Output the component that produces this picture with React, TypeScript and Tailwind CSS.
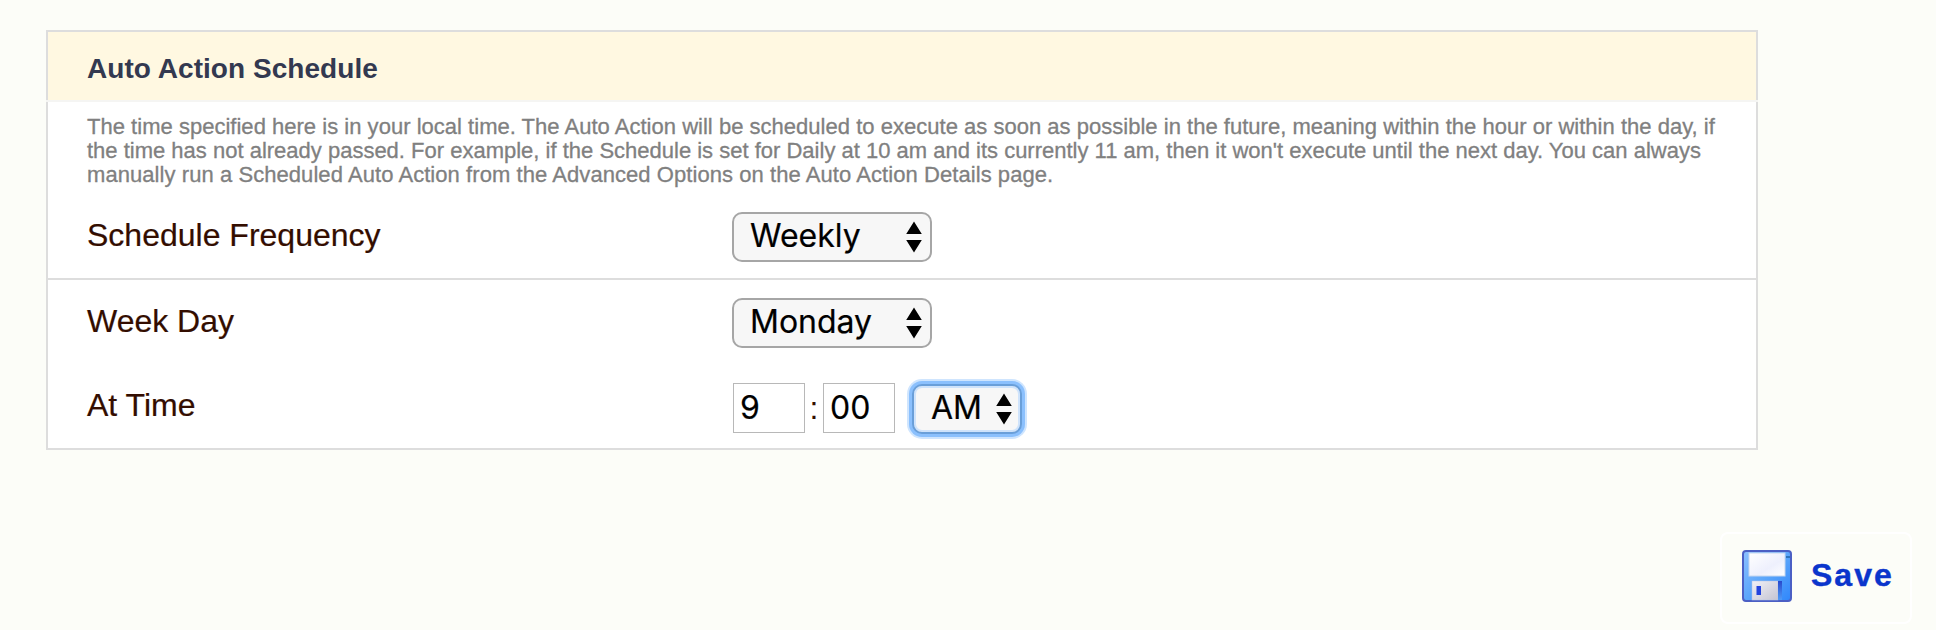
import React from "react";

function Arrows() {
  return (
    <svg className="pointer-events-none col-start-1 row-start-1 mr-2.5 self-center justify-self-end" width="16" height="32" viewBox="0 0 16 32">
      <path d="M8 0.5 L15.800 13 H0.200 Z M0.200 19 H15.800 L8 31.500 Z" fill="#000" />
    </svg>
  );
}

function Select({ options, label, width, focused = false }: { options: string[]; label: string; width: string; focused?: boolean }) {
  return (
    <div className={`grid h-[50px] ${width}`}>
      <select
        aria-label={label}
        className={`col-start-1 row-start-1 h-full w-full appearance-none rounded-[10px] border-2 bg-[#f7f7f7] pb-0.5 font-[Inter,sans-serif] text-[32px] leading-10 text-black outline-none [-webkit-text-stroke:0.2px] ${
          focused
            ? "border-[#6a9fd9] pl-[17px] tracking-[-0.2px] shadow-[0_0_0_3px_#8bc0fd,0_0_0_5px_#cfe5fe,inset_0_0_0_2px_#cfe3fb]"
            : "border-[#a6a6a6] pl-4"
        }`}
      >
        {options.map((o) => (
          <option key={o}>{o}</option>
        ))}
      </select>
      <Arrows />
    </div>
  );
}

function Label({ children }: { children: React.ReactNode }) {
  return (
    <div className="w-[645px] text-[32px] leading-[46px] text-[#330d00] [-webkit-text-stroke:0.2px]">{children}</div>
  );
}

function TimeInput({ value, label }: { value: string; label: string }) {
  return (
    <input
      aria-label={label}
      defaultValue={value}
      className="h-[50px] w-[72px] border border-[#b8b8b8] bg-white pb-0.5 pl-1.5 font-[Inter,sans-serif] text-[32px] leading-10 text-black outline-none [-webkit-text-stroke:0.2px]"
    />
  );
}

function SaveIcon() {
  return (
    <svg className="blur-[0.5px]" width="50" height="52" viewBox="0 0 50 52">
      <defs>
        <linearGradient id="body" x1="0" y1="0" x2="1" y2="1">
          <stop offset="0" stopColor="#8cc0ff" />
          <stop offset="0.5" stopColor="#5ba6fb" />
          <stop offset="1" stopColor="#2f86fb" />
        </linearGradient>
        <linearGradient id="label" x1="0" y1="0" x2="1" y2="1">
          <stop offset="0" stopColor="#ffffff" />
          <stop offset="0.6" stopColor="#eef0fd" />
          <stop offset="1" stopColor="#ffffff" />
        </linearGradient>
        <linearGradient id="shutter" x1="0" y1="0" x2="1" y2="1">
          <stop offset="0" stopColor="#f0f0f6" />
          <stop offset="1" stopColor="#c4c4d2" />
        </linearGradient>
        <linearGradient id="bar" x1="0" y1="0" x2="0" y2="1">
          <stop offset="0" stopColor="#2848cc" />
          <stop offset="1" stopColor="#4f9cf8" />
        </linearGradient>
      </defs>
      <rect x="1" y="1" width="48" height="50" rx="3" fill="url(#body)" stroke="#4b5fc4" strokeWidth="2" />
      <rect x="7" y="3" width="36" height="23" fill="url(#label)" stroke="#c5d6ee" />
      <rect x="44" y="6" width="4" height="2" fill="#2e74bd" />
      <rect x="10" y="31" width="26" height="19" fill="url(#shutter)" stroke="#b4c4e6" strokeWidth="0.5" />
      <rect x="36" y="31" width="4" height="19" fill="url(#bar)" />
      <rect x="14.500" y="36" width="4.500" height="9" fill="#2343dd" />
    </svg>
  );
}

export default function App() {
  return (
    <div className="h-[630px] w-[1936px] overflow-hidden bg-[#fcfdf8] pl-[46px] pt-[30px] font-['Liberation_Sans',Arial,sans-serif]">
      <section className="h-[420px] w-[1712px] bg-white">
        <header className="flex h-[70px] items-center border-2 border-b-0 border-[#dddddd] bg-[#fff8e1] pl-[39px] pt-1.5">
          <h1 className="text-[28px] font-bold leading-8 tracking-[0.05px] text-[#333950]">Auto Action Schedule</h1>
        </header>
        <div className="h-0.5 bg-[#f5f5f3]" />
        <div className="h-[348px] border-2 border-t-0 border-[#dddddd]">
          <div className="h-[178px] border-b-2 border-[#dddddd] pl-[39px] pt-[13px]">
            <p className="whitespace-nowrap text-[22px] leading-6 text-[#808080] [-webkit-text-stroke:0.3px]">
              <span className="tracking-[0.02px]">
                The time specified here is in your local time. The Auto Action will be scheduled to execute as soon as possible in the future, meaning within the hour or within the day, if
              </span>
              <br />
              the time has not already passed. For example, if the Schedule is set for Daily at 10 am and its currently 11 am, then it won't execute until the next day. You can always
              <br />
              <span className="tracking-[0.065px]">
                manually run a Scheduled Auto Action from the Advanced Options on the Auto Action Details page.
              </span>
            </p>
            <div className="mt-[25px] flex">
              <Label>Schedule Frequency</Label>
              <Select label="Schedule Frequency" width="w-[200px]" options={["Weekly", "Daily", "Hourly"]} />
            </div>
          </div>
          <div className="flex pl-[39px] pt-[18px]">
            <Label>Week Day</Label>
            <Select label="Week Day" width="w-[200px]" options={["Monday", "Tuesday", "Wednesday", "Thursday", "Friday", "Saturday", "Sunday"]} />
          </div>
          <div className="mt-[34px] flex pl-[39px]">
            <Label>At Time</Label>
            <div className="ml-px mt-px flex">
              <TimeInput label="Hour" value="9" />
              <span className="w-[18px] text-center text-[32px] leading-[50px] text-[#330d00]">:</span>
              <TimeInput label="Minute" value="00" />
              <div className="ml-[17px] pt-px">
                <Select label="AM or PM" width="w-[110px]" focused options={["AM", "PM"]} />
              </div>
            </div>
          </div>
        </div>
      </section>
      <button className="ml-[1674px] mt-[82px] flex h-[92px] w-[192px] items-center rounded-lg border-2 border-white pb-1 pl-5">
        <SaveIcon />
        <span className="mb-0.5 ml-[19px] text-[32px] font-bold leading-8 tracking-[2px] text-[#0a35cc] [-webkit-text-stroke:0.4px]">Save</span>
      </button>
    </div>
  );
}
